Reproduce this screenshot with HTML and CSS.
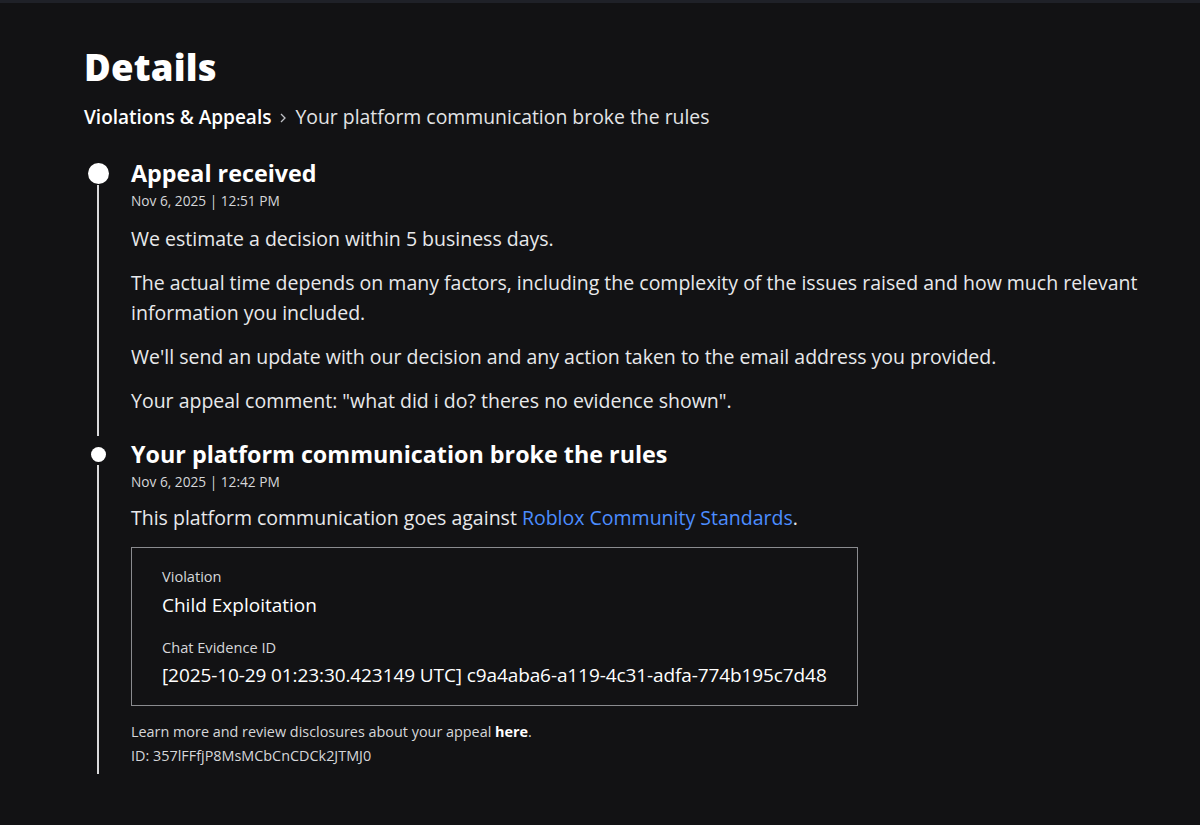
FILE: index.html
```html
<!DOCTYPE html>
<html>
<head>
<meta charset="utf-8">
<link rel="stylesheet" href="styles.css">
</head>
<body>
<div class="topbar"></div>
<main class="page">
  <h1 class="title">Details</h1>
  <nav class="crumbs">
    <span class="crumb-link">Violations &amp; Appeals</span>
    <svg class="chev" width="10" height="14" viewBox="0 0 10 14"><path d="M3 3l4 4-4 4" fill="none" stroke="#bfc1c6" stroke-width="1.3"/></svg>
    <span class="crumb-cur">Your platform communication broke the rules</span>
  </nav>

  <section class="timeline">
    <div class="item">
      <div class="rail"><span class="dot big"></span><span class="line"></span></div>
      <div class="body">
        <h2 class="head">Appeal received</h2>
        <div class="date">Nov 6, 2025 | 12:51 PM</div>
        <p>We estimate a decision within 5 business days.</p>
        <p>The actual time depends on many factors, including the complexity of the issues raised and how much relevant information you included.</p>
        <p>We'll send an update with our decision and any action taken to the email address you provided.</p>
        <p>Your appeal comment: "what did i do? theres no evidence shown".</p>
      </div>
    </div>
    <div class="item">
      <div class="rail"><span class="dot small"></span><span class="line"></span></div>
      <div class="body">
        <h2 class="head">Your platform communication broke the rules</h2>
        <div class="date">Nov 6, 2025 | 12:42 PM</div>
        <p class="tight">This platform communication goes against <span class="link">Roblox Community Standards</span>.</p>
        <div class="box">
          <div class="label">Violation</div>
          <div class="value">Child Exploitation</div>
          <div class="label second">Chat Evidence ID</div>
          <div class="value">[2025-10-29 01:23:30.423149 UTC] c9a4aba6-a119-4c31-adfa-774b195c7d48</div>
        </div>
        <div class="foot">Learn more and review disclosures about your appeal <b>here</b>.</div>
        <div class="foot">ID: 357lFFfjP8MsMCbCnCDCk2JTMJ0</div>
      </div>
    </div>
  </section>
</main>
</body>
</html>
```

FILE: styles.css
```css
html, body {
  margin: 0;
  padding: 0;
  background: #121214;
  color: #f2f2f3;
  font-family: "Open Sans", "Liberation Sans", sans-serif;
}
.topbar {
  height: 3px;
  background: #1f2128;
}
.page {
  padding: 0 40px 0 84px;
}
.title {
  margin: 0;
  padding-top: 39px;
  font-size: 36.5px;
  line-height: 50px;
  font-weight: 800;
  color: #ffffff;
  letter-spacing: 0.2px;
}
.crumbs {
  display: flex;
  align-items: center;
  gap: 7px;
  margin-top: 12px;
  font-size: 19px;
  line-height: 26px;
}
.crumb-link { color: #ffffff; font-weight: 600; font-size: 19px; }
.crumb-cur { color: #e3e4e6; font-size: 19.4px; }
.chev { margin-top: 2px; }

.timeline {
  margin-top: 28px;
}
.item {
  display: flex;
}
.rail {
  width: 47px;
  flex: none;
  display: flex;
  flex-direction: column;
  align-items: flex-start;
}
.dot {
  display: block;
  background: #fff;
  border-radius: 50%;
  flex: none;
}
.dot.big {
  width: 21px;
  height: 21px;
  margin-top: 4.5px;
  margin-left: 4px;
}
.dot.small {
  width: 15px;
  height: 15px;
  margin-top: 8px;
  margin-left: 6.5px;
}
.line {
  display: block;
  width: 2px;
  background: #d9d9db;
  flex: 1;
  margin-left: 13px;
  margin-top: 2px;
  margin-bottom: 3px;
}
.big + .line { margin-top: 1px; }
.small + .line { margin-top: 3px; }
.body {
  flex: 1;
  padding-bottom: 9px;
}
.head {
  margin: 0;
  font-size: 23.3px;
  line-height: 30px;
  font-weight: 700;
  color: #fff;
}
.date {
  margin-top: 4px;
  font-size: 13.7px;
  line-height: 18px;
  color: #d6d7da;
  margin-bottom: 14px;
}
.body p {
  margin: 0 0 14px;
  font-size: 19.5px;
  line-height: 30px;
  color: #e8e9eb;
}
.body p.tight { margin-top: -2px; }
.link { color: #4c8dff; }
.box {
  width: 665px;
  border: 1px solid #8a8b8f;
  padding: 17px 30px 15px;
  margin-top: 1px;
}
.label {
  font-size: 14.6px;
  line-height: 22px;
  color: #d6d7da;
}
.label.second { margin-top: 16px; }
.value {
  margin-top: 3px;
  font-size: 19px;
  line-height: 30px;
  color: #fff;
  white-space: nowrap;
}
.label.second + .value { margin-top: 2px; letter-spacing: -0.1px; }
.foot {
  font-size: 14.4px;
  line-height: 24px;
  color: #d6d7da;
}
.box + .foot { margin-top: 14px; }
.foot b { color: #fff; font-weight: 700; }
```
